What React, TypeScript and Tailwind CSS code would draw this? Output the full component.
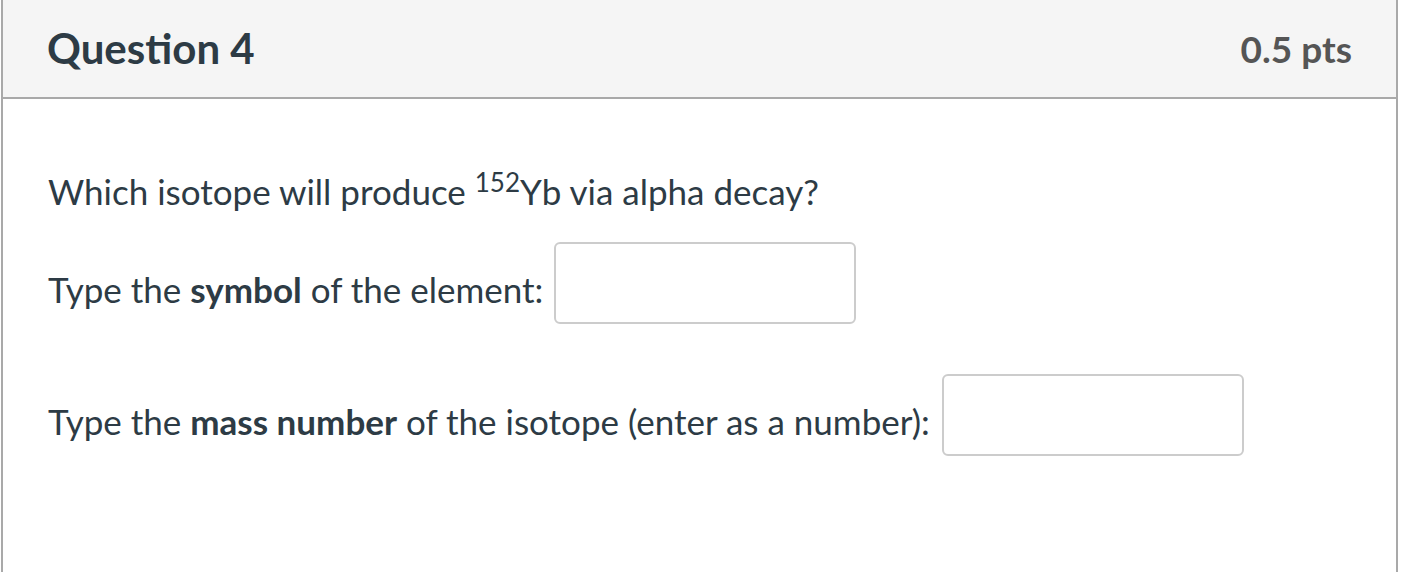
export default function App() {
  return (
    <div className="w-[1412px] h-[572px] bg-white overflow-hidden" style={{ fontFamily: 'Lato, "Noto Sans", sans-serif' }}>
      <div className="ml-px w-[1397px] h-[600px] border-x-2 border-[#a9a9a9]">
        <div className="h-[99px] bg-[#f5f5f5] border-b-2 border-[#a9a9a9] flex items-center justify-between pl-[44px] pr-[44px]">
          <h2 className="text-[42px] font-bold text-[#2d3b45]">Question 4</h2>
          <div className="text-[37px] font-bold text-[#555555]">0.5 pts</div>
        </div>
        <div className="pl-[45px] pt-[70px] text-[35px] text-[#2d3b45]">
          <p className="leading-[44px]">
            Which isotope will produce <sup className="text-[26px]">152</sup>Yb via alpha decay?
          </p>
          <div className="mt-[29px] flex items-center gap-[11px]">
            <span className="pt-[12px]">Type the <b>symbol</b> of the element:</span>
            <input type="text" className="w-[302px] h-[82px] rounded-[6px] border-2 border-[#cccccc] bg-white" />
          </div>
          <div className="mt-[50px] flex items-center gap-[12px]">
            <span className="pt-[12px]">Type the <b>mass number</b> of the isotope (enter as a number):</span>
            <input type="text" className="w-[302px] h-[82px] rounded-[6px] border-2 border-[#cccccc] bg-white" />
          </div>
        </div>
      </div>
    </div>
  );
}
